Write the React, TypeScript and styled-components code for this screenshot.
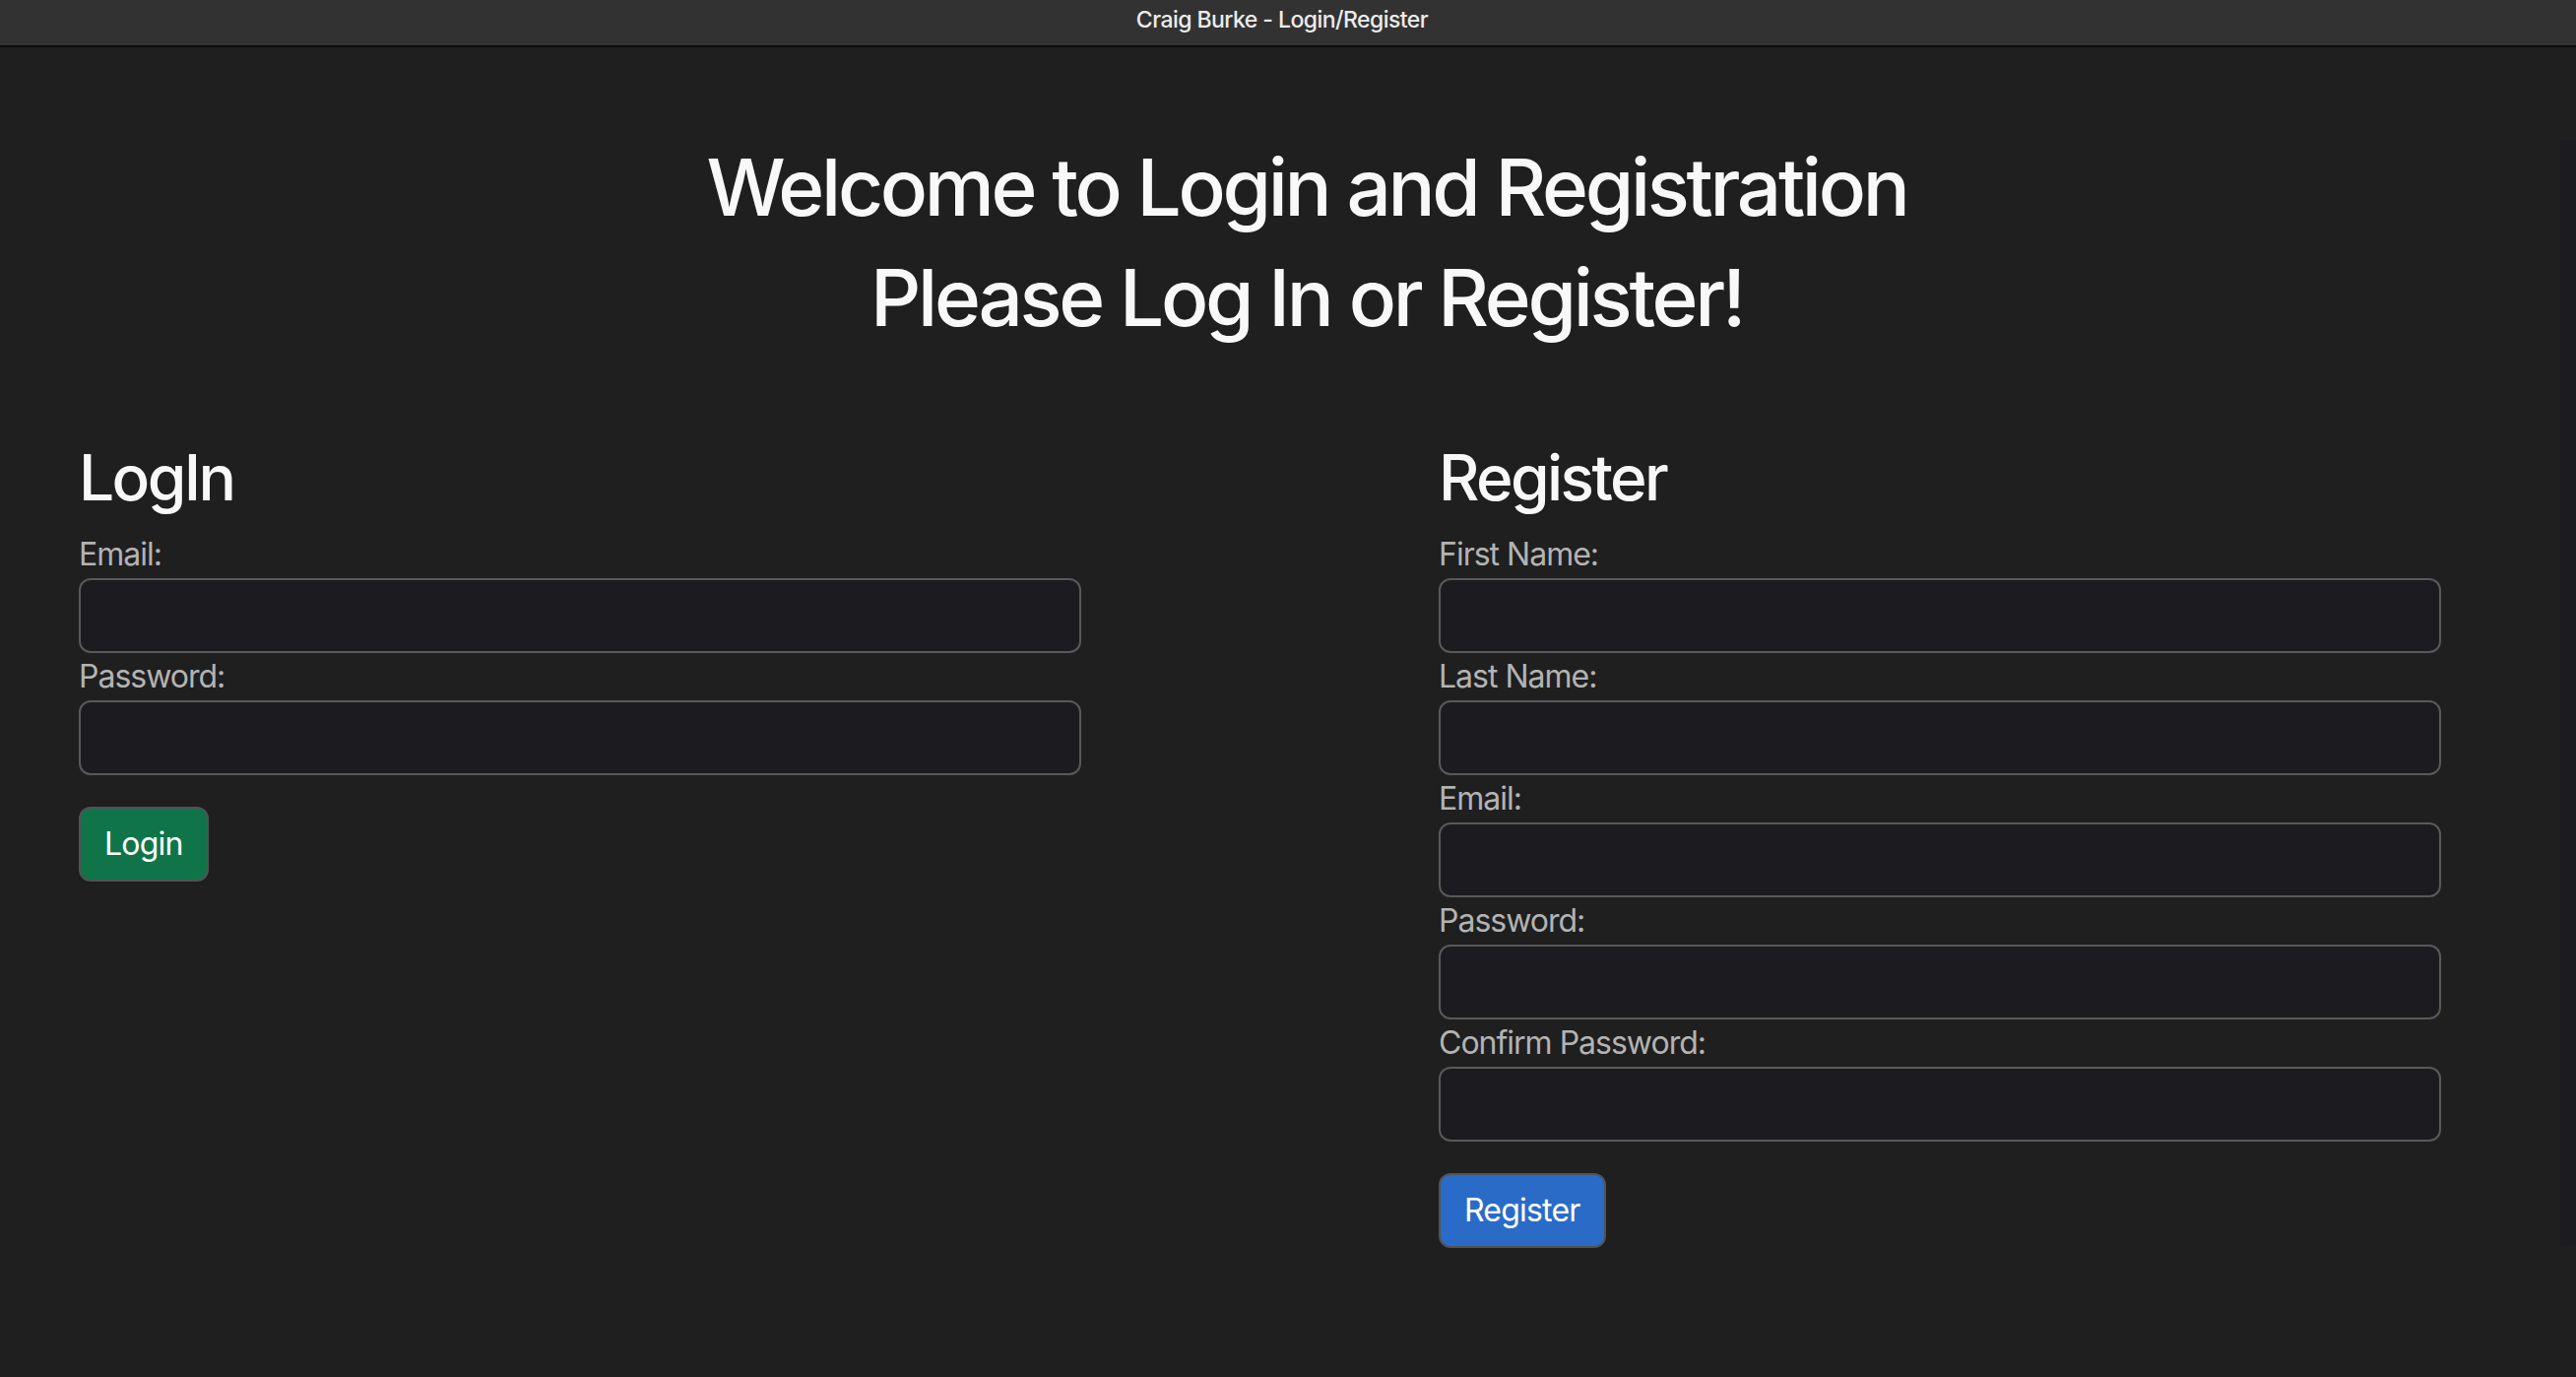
import React from "react";
import styled, { createGlobalStyle } from "styled-components";

const GlobalStyle = createGlobalStyle`
  html, body {
    margin: 0;
    padding: 0;
    background: #1f1f1f;
    min-height: 100%;
  }
  body {
    font-family: Inter, "Noto Sans", "Liberation Sans", sans-serif;
    color: #f5f5f5;
  }
  * { box-sizing: border-box; }
`;

const Window = styled.div`
  position: relative;
  width: 100%;
  min-height: 1398px;
  background: #1f1f1f;
`;

const TitleBar = styled.div`
  height: 48px;
  background: #323232;
  border-bottom: 2px solid #0c0c0c;
  display: flex;
  align-items: center;
  justify-content: center;
  padding-bottom: 7px;
  padding-right: 12px;
  color: #ececec;
  font-size: 23px;
  font-weight: 500;
  letter-spacing: -0.55px;
`;

const Page = styled.main`
  padding: 94px 42px 0 80px;
`;

const Header = styled.header`
  text-align: center;
`;

const Title = styled.h1`
  margin: 0 0 16px;
  font-size: 80px;
  line-height: 96px;
  font-weight: 500;
  color: #f8f8f8;
  letter-spacing: -3.3px;
`;

const Columns = styled.div`
  display: grid;
  grid-template-columns: 1381px 1fr;
  margin-top: 96px;
`;

const FormColumn = styled.form`
  display: flex;
  flex-direction: column;
  align-items: flex-start;
`;

const SectionTitle = styled.h2`
  margin: 0 0 16px;
  font-size: 64px;
  line-height: 77px;
  font-weight: 500;
  color: #f8f8f8;
  letter-spacing: -2.6px;
`;

const Label = styled.label`
  display: block;
  font-size: 32px;
  line-height: 48px;
  color: #b3b3b3;
  letter-spacing: -1px;
`;

const Input = styled.input`
  display: block;
  width: 1018px;
  height: 76px;
  background: #1c1b20;
  border: 2px solid #595959;
  border-radius: 12px;
  padding: 12px 24px;
  font-size: 32px;
  color: #eee;
  outline: none;
`;

const Button = styled.button<{ $variant: "success" | "primary" }>`
  margin-top: 32px;
  height: 76px;
  padding: 12px 24px;
  border: 2px solid #525252;
  border-radius: 12px;
  background: ${(p) => (p.$variant === "success" ? "#0f7549" : "#2a6bc8")};
  color: #ffffff;
  font-family: inherit;
  font-size: 32px;
  line-height: 48px;
  letter-spacing: -0.8px;
  cursor: pointer;
`;

const ScrollTrack = styled.div`
  position: absolute;
  right: 0;
  top: 142px;
  width: 16px;
  height: 1123px;
  background: #1c1b20;
`;

const Field: React.FC<{ label: string; type?: string }> = ({ label, type = "text" }) => (
  <>
    <Label>{label}</Label>
    <Input type={type} />
  </>
);

export default function App() {
  return (
    <Window>
      <GlobalStyle />
      <TitleBar>Craig Burke - Login/Register</TitleBar>
      <Page>
        <Header>
          <Title>Welcome to Login and Registration</Title>
          <Title>Please Log In or Register!</Title>
        </Header>
        <Columns>
          <FormColumn onSubmit={(e) => e.preventDefault()}>
            <SectionTitle>LogIn</SectionTitle>
            <Field label="Email:" type="email" />
            <Field label="Password:" type="password" />
            <Button $variant="success" type="submit">Login</Button>
          </FormColumn>
          <FormColumn onSubmit={(e) => e.preventDefault()}>
            <SectionTitle>Register</SectionTitle>
            <Field label="First Name:" />
            <Field label="Last Name:" />
            <Field label="Email:" type="email" />
            <Field label="Password:" type="password" />
            <Field label="Confirm Password:" type="password" />
            <Button $variant="primary" type="submit">Register</Button>
          </FormColumn>
        </Columns>
      </Page>
      <ScrollTrack />
    </Window>
  );
}
